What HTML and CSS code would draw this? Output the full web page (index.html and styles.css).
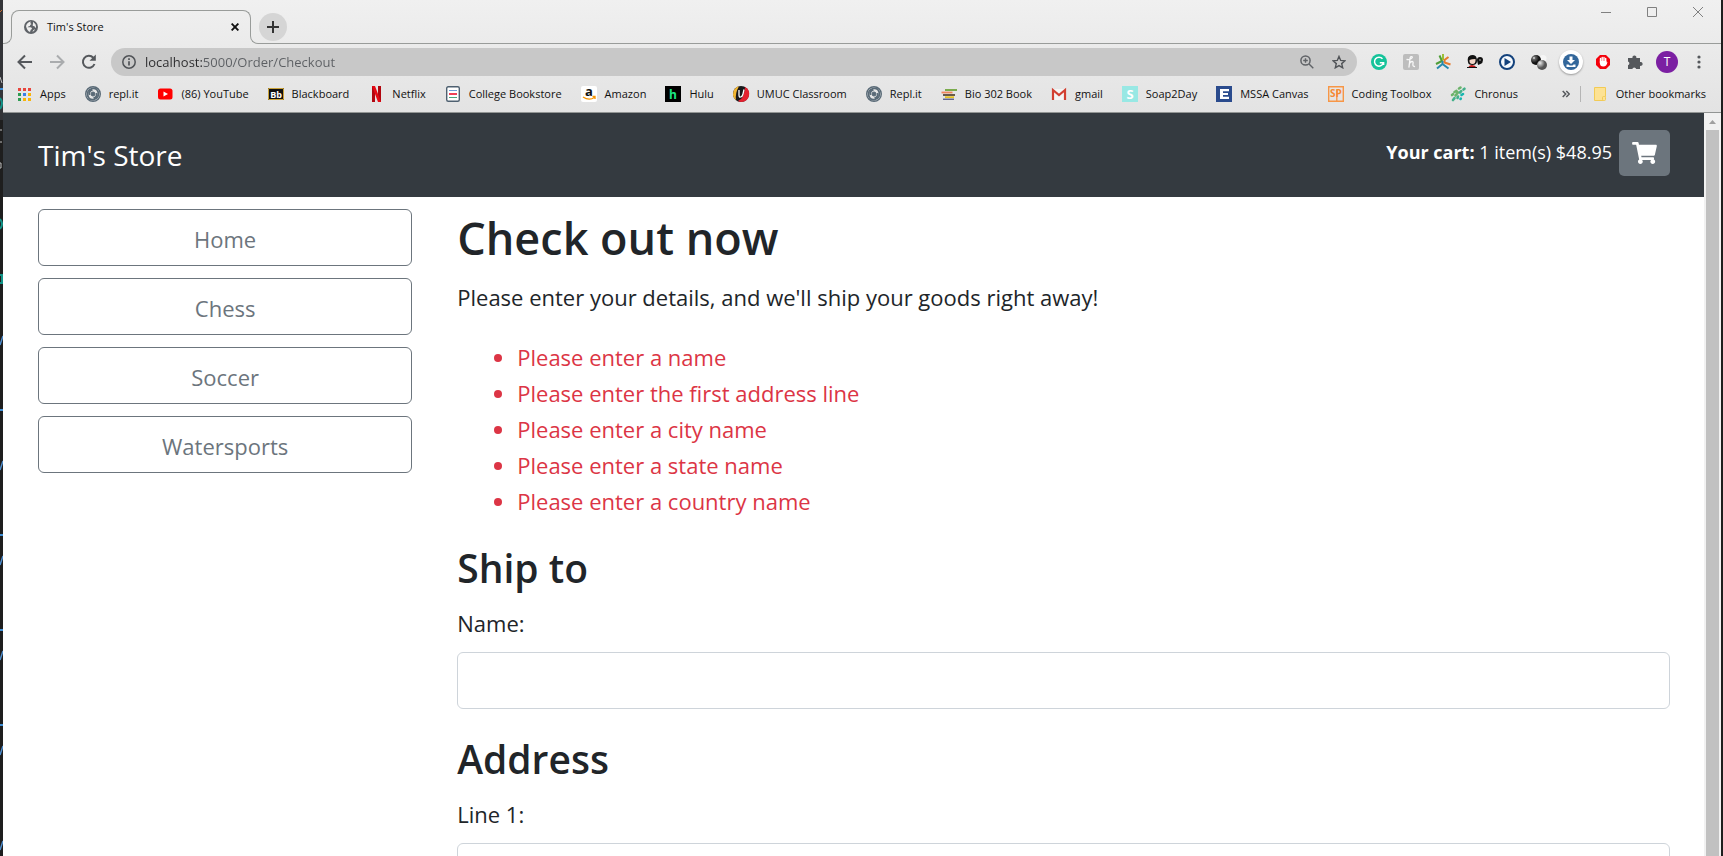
FILE: index.html
```html
<!DOCTYPE html>
<html lang="en">
<head>
<meta charset="utf-8">
<title>Tim's Store</title>
<link rel="stylesheet" href="styles.css">
</head>
<body>
<div class="desktop">
  <svg class="behind" aria-hidden="true" width="3" height="856" viewBox="0 0 3 856">
    <rect width="3" height="856" fill="#1e1e1e"/>
    <rect width="3" height="120" fill="#333438"/>
    <path d="M0 12l2-2" stroke="#c96a2e"/>
    <path d="M0 77l2 6M0 130h2M0 142h2M0 163h1v5H0" stroke="#bdbdbd" fill="none"/>
    <path d="M0 89h3M0 410h3M0 535h3M0 630h3M0 725h3" stroke="#3f8fd6" stroke-width="2"/>
    <path d="M0 98q4 5 0 11M0 219q4 5 0 10M0 275h2v8H0" stroke="#129488" stroke-width="2" fill="none"/>
    <path d="M0 345l3-9M0 470l3-9M0 565l3-9M0 660l3-9M0 755l3-9M0 850l3-9" stroke="#4f8fd0" stroke-width="1.5"/>
  </svg>

  <div class="window">
    <header class="chrome">
      <div class="tabstrip">
        <span class="flare flare-left"></span>
        <div class="tab">
          <svg width="14" height="14" viewBox="0 0 14 14"><circle cx="7" cy="7" r="7" fill="#5f6368"/><path d="M2 6q1-4 5-4.500Q5.500 3 7.500 4q-2 .8-1.500 2-2 .2-2.500 1.200h3q1.500.2 1.500 1.800-1.500 0-2 3Q3 11 2 6z" fill="#eee"/><path d="M9 1.800l2.500 2.500q.8 2 .5 3.500-1 0-1.500-1.500-1.500 0-2-1 .8-.8.500-3.500zM11 9q-.5 2-2.500 3 .2-2 2.500-3z" fill="#eee"/></svg>
          <span class="tab-title">Tim's Store</span>
          <button class="tab-close" aria-label="Close tab"><svg width="8" height="8" viewBox="0 0 8 8"><path d="M.6.600l6.800 6.800M7.400.6L.6 7.400" stroke="#111" stroke-width="1.900"/></svg></button>
        </div>
        <span class="flare flare-right"></span>
        <div class="strip-rest">
          <button class="new-tab" aria-label="New tab"><svg width="12" height="12" viewBox="0 0 12 12"><path d="M6 0v12M0 6h12" stroke="#333" stroke-width="2"/></svg></button>
          <div class="controls">
            <button aria-label="Minimize"><svg width="10" height="10" viewBox="0 0 10 10"><path d="M0 5.500h10" stroke="#808080"/></svg></button>
            <button aria-label="Maximize"><svg width="10" height="10" viewBox="0 0 10 10"><path d="M.5.500h9v9h-9z" fill="none" stroke="#808080"/></svg></button>
            <button aria-label="Close window"><svg width="10" height="10" viewBox="0 0 10 10"><path d="M0 0l10 10M10 0L0 10" stroke="#808080"/></svg></button>
          </div>
        </div>
      </div>

      <div class="toolbar">
        <button class="tool" aria-label="Back"><svg width="16" height="16" viewBox="0 0 16 16"><path d="M15 8H2M8 1.500L1.500 8 8 14.500" fill="none" stroke="#55585c" stroke-width="2"/></svg></button>
        <button class="tool" aria-label="Forward"><svg width="16" height="16" viewBox="0 0 16 16"><path d="M1 8h13M8 1.500L14.500 8 8 14.500" fill="none" stroke="#aaacae" stroke-width="2"/></svg></button>
        <button class="tool" aria-label="Reload"><svg width="16" height="16" viewBox="0 0 16 16"><path d="M13.500 10A6 6 0 1 1 12.300 3.700" fill="none" stroke="#55585c" stroke-width="2"/><path d="M14.800.5v6.300H8.500z" fill="#55585c"/></svg></button>
        <div class="omnibox">
          <svg width="14" height="14" viewBox="0 0 14 14"><circle cx="7" cy="7" r="6.200" fill="none" stroke="#505357" stroke-width="1.500"/><path d="M7 6.200V10.500M7 3.300v1.700" stroke="#505357" stroke-width="1.700"/></svg>
          <input class="address" type="text" aria-label="Address" value="localhost:5000/Order/Checkout">
          <button class="tool" aria-label="Zoom"><svg width="14" height="14" viewBox="0 0 14 14"><circle cx="5.500" cy="5.500" r="4.600" fill="none" stroke="#606367" stroke-width="1.500"/><path d="M9 9l4.300 4.300M3.200 5.500h4.600M5.500 3.200v4.600" stroke="#606367" stroke-width="1.400"/></svg></button>
          <button class="tool" aria-label="Bookmark"><svg width="14" height="14" viewBox="0 0 14 14"><path d="M7 1.400l1.700 4 4.300.4-3.300 2.800 1 4.200L7 10.600l-3.700 2.200 1-4.200L1 5.800l4.300-.4z" fill="none" stroke="#505357" stroke-width="1.400"/></svg></button>
        </div>
        <button class="tool" aria-label="Grammarly"><svg width="16" height="16" viewBox="0 0 16 16"><circle cx="8" cy="8" r="8" fill="#15c39a"/><path d="M11.500 4.800A4.500 4.500 0 1 0 12.300 9M8.800 8.700h3.800V11" fill="none" stroke="#fff" stroke-width="1.500"/></svg></button>
        <button class="tool" aria-label="Honey"><svg width="16" height="16" viewBox="0 0 16 16"><rect width="16" height="16" rx="2" fill="#bdbdbd"/><path d="M4 5.500q2 .5 4-.8t1-2q-1.500-.6-2 1.800L6 13M6.500 9.500q1-2 2.500-2t1 2q-.6 3 1.500 3" fill="none" stroke="#f7f7f7" stroke-width="1.300" stroke-linecap="round"/></svg></button>
        <button class="tool" aria-label="Tab tools"><svg width="16" height="16" viewBox="0 0 16 16" fill="none" stroke-width="2"><path d="M4.500 1.500L7 7l-6 3" stroke="#4f9e38"/><path d="M8 0v6" stroke="#9bbf37"/><path d="M13.500 3L9.500 6v2.500l6 2" stroke="#e77b2d"/><path d="M2 14.500L7.500 10l6 4.500M7.500 7v4" stroke="#2789ad"/></svg></button>
        <button class="tool" aria-label="Reader"><svg width="16" height="16" viewBox="0 0 16 16"><path d="M1 8Q-.5 1 6 1q4 0 4 6 0 4-4.500 4T1 8z" fill="#111"/><path d="M2.500 6q2-1 6-1 .5 5-3 5t-3-4z" fill="#f3d5c6"/><path d="M1 14q1-3 4-3t5 3z" fill="#c01515"/><path d="M0 13.500h10" stroke="#111"/><path d="M10 6q0-3 3-3t3 3-2.500 4L11 11z" fill="#111"/><path d="M12 6h2" stroke="#aaa"/></svg></button>
        <button class="tool" aria-label="Media player"><svg width="16" height="16" viewBox="0 0 16 16"><circle cx="8" cy="8" r="7" fill="#f5f9fd" stroke="#14427c" stroke-width="2"/><path d="M5.500 4l6.500 4-6.500 4z" fill="#14427c"/></svg></button>
        <button class="tool" aria-label="Spheres"><svg width="16" height="16" viewBox="0 0 16 16"><defs><radialGradient id="dark" cx=".3" cy=".3"><stop stop-color="#fff"/><stop offset=".3" stop-color="#666"/><stop offset="1" stop-color="#111"/></radialGradient><radialGradient id="gray" cx=".3" cy=".3"><stop stop-color="#eee"/><stop offset="1" stop-color="#555"/></radialGradient></defs><circle cx="12" cy="4.500" r="3.500" fill="#f6f6f6"/><circle cx="5" cy="6" r="5" fill="url(#dark)"/><circle cx="11" cy="11" r="5" fill="url(#gray)"/></svg></button>
        <button class="tool" aria-label="Downloader"><span class="halo"><svg width="16" height="16" viewBox="0 0 16 16"><circle cx="8" cy="8" r="8" fill="#33679b"/><path d="M6.500 2.500h3v3.500H12L8 10 4 6h2.500zM3.500 10.500h2l1 1h3l1-1h2V13h-9z" fill="#fff"/></svg></span></button>
        <button class="tool" aria-label="Ad blocker"><svg width="14" height="14" viewBox="0 0 14 14"><path d="M4 0h6l4 4v6l-4 4H4l-4-4V4z" fill="#f4000b"/><path d="M4.500 8V3.500M6.200 7V2.500M8 7V2.500M9.700 8V3.500" stroke="#fff" stroke-width="1.400" stroke-linecap="round"/><path d="M3.900 6h6.500v1.500L11.500 7q-.8 4.500-4.200 4.500T3.900 8z" fill="#fff"/></svg></button>
        <button class="tool" aria-label="Extensions"><svg width="16" height="16" viewBox="0 0 16 16"><path d="M1 4h4.500a2 2 0 1 1 3.800 0H13v4a2 2 0 1 1 0 3.800V15H9.200a2 2 0 0 0-3.900 0H1v-3.800a2 2 0 0 0 0-3.800z" fill="#55585c"/></svg></button>
        <button class="tool" aria-label="Profile"><span class="avatar">T</span></button>
        <button class="tool" aria-label="Menu"><svg width="4" height="14" viewBox="0 0 4 14" fill="#55585c"><circle cx="2" cy="2" r="1.600"/><circle cx="2" cy="7" r="1.600"/><circle cx="2" cy="12" r="1.600"/></svg></button>
      </div>

      <nav class="bookmarks" aria-label="Bookmarks">
        <a class="bookmark" href="#"><svg viewBox="0 0 16 16"><path d="M2 2h3v3H2z M7 2h3v3H7z" fill="#e8453c"/><path d="M12 2h3v3h-3z" fill="#e8453c"/><path d="M2 7h3v3H2zM2 12h3v3H2z" fill="#2e9c52"/><path d="M7 7h3v3H7z" fill="#3a7de8"/><path d="M12 7h3v3h-3zM7 12h3v3H7zM12 12h3v3h-3z" fill="#f8b40a"/></svg>Apps</a>
        <a class="bookmark" href="#"><svg viewBox="0 0 16 16" fill="none" stroke="#596a77"><circle cx="8" cy="8" r="7.300" stroke-width="1.400"/><circle cx="8" cy="8" r="2" fill="#596a77"/><path d="M3 11Q1 4 7 2.500q5-1 6 3.500M13 5q2 7-4 8.500-5 1-6-3.500M4.500 9q-1-4 3-5M11.500 7q1 4-3 5" stroke-width="1.600"/></svg>repl.it</a>
        <a class="bookmark" href="#"><svg viewBox="0 0 16 16"><rect x="1" y="2.500" width="14.500" height="11" rx="2.500" fill="#f00"/><path d="M6.500 5.500L11 8l-4.500 2.500z" fill="#fff"/></svg>(86) YouTube</a>
        <a class="bookmark" href="#"><svg viewBox="0 0 16 16"><rect y="2" width="16" height="12" fill="#111"/><path d="M.5 2.500h15v11H.5z" fill="none" stroke="#caa33a"/><text x="8" y="11.500" text-anchor="middle" class="mark" font-size="9" fill="#fff">Bb</text></svg>Blackboard</a>
        <a class="bookmark" href="#"><svg viewBox="0 0 16 16"><path d="M4 0h3v16H4zM10 0h3v16h-3z" fill="#b1060f"/><path d="M4 0h3l6 16h-3z" fill="#e50914"/></svg>Netflix</a>
        <a class="bookmark" href="#"><svg viewBox="0 0 16 16"><rect x="1.700" y=".7" width="12.600" height="14.600" rx="1.500" fill="#fff" stroke="#4e6070" stroke-width="1.400"/><path d="M4 4.500h8" stroke="#6d9ed8"/><path d="M4 8h8" stroke="#ef4056" stroke-width="2"/><path d="M4 11.500h8" stroke="#4aa57c"/></svg>College Bookstore</a>
        <a class="bookmark" href="#"><svg viewBox="0 0 16 16"><rect width="16" height="16" rx="2" fill="#fff"/><text x="8" y="10" text-anchor="middle" class="mark" font-size="13" fill="#111">a</text><path d="M2 11q6 4 11.500.5M11.500 10.500h2.500v2.500" fill="none" stroke="#f79400" stroke-width="1.300"/></svg>Amazon</a>
        <a class="bookmark" href="#"><svg viewBox="0 0 16 16"><rect width="16" height="16" fill="#000"/><text x="8" y="12.500" text-anchor="middle" class="mark" font-size="12" fill="#1ce783">h</text></svg>Hulu</a>
        <a class="bookmark" href="#"><svg viewBox="0 0 16 16"><circle cx="8" cy="8" r="8" fill="#18181a"/><path d="M3 14.200A8 8 0 0 1 6 .3Q2 7 3 14.200z" fill="#f2b632"/><path d="M12 1A8 8 0 0 1 9 16q-3 0-4-1 6-2 7-14z" fill="#e3212f"/><path d="M6 4v5q0 2.500 1.700 2T10 8l1-4.500" fill="none" stroke="#fff" stroke-width="1.300"/></svg>UMUC Classroom</a>
        <a class="bookmark" href="#"><svg viewBox="0 0 16 16" fill="none" stroke="#596a77"><circle cx="8" cy="8" r="7.300" stroke-width="1.400"/><circle cx="8" cy="8" r="2" fill="#596a77"/><path d="M3 11Q1 4 7 2.500q5-1 6 3.500M13 5q2 7-4 8.500-5 1-6-3.500M4.500 9q-1-4 3-5M11.500 7q1 4-3 5" stroke-width="1.600"/></svg>Repl.it</a>
        <a class="bookmark" href="#"><svg viewBox="0 0 16 16" fill="none" stroke-width="1.800"><path d="M4 4h12" stroke="#6fa53c"/><path d="M.5 6.500h11" stroke="#f0865a"/><path d="M2 9h12" stroke="#5a4a38"/><path d="M4 11.200h9" stroke="#e7c21f"/><path d="M2 13.200h11" stroke="#252e6b" stroke-width="1"/></svg>Bio 302 Book</a>
        <a class="bookmark" href="#"><svg viewBox="0 0 16 16"><path d="M1 3h14v11H1z" fill="#f4f4f4"/><path d="M2 14V4l6 5 6-5v10" fill="none" stroke="#d23f31" stroke-width="2.200"/></svg>gmail</a>
        <a class="bookmark" href="#"><svg viewBox="0 0 16 16"><rect width="16" height="16" fill="#98e8e4"/><text x="8" y="13" text-anchor="middle" class="mark" font-size="13" fill="#fff">S</text></svg>Soap2Day</a>
        <a class="bookmark" href="#"><svg viewBox="0 0 16 16"><rect width="16" height="16" fill="#2a4b8d"/><path d="M4 3h9v2.200H7v1.700h5v2.200H7v1.700h6V13H4z" fill="#fff"/></svg>MSSA Canvas</a>
        <a class="bookmark" href="#"><svg viewBox="0 0 16 16"><path d="M.7.700h14.600v14.600H.7z" fill="none" stroke="#f79646" stroke-width="1.400"/><path d="M8.800 4v11.500" stroke="#f79646" stroke-width="1.400"/><text x="8" y="11" text-anchor="middle" class="mark" font-size="10" fill="#f58a33">SP</text></svg>Coding Toolbox</a>
        <a class="bookmark" href="#"><svg viewBox="0 0 16 16" stroke-linecap="round" stroke-width="2.600"><path d="M9 2.500l1.500-1M4.500 6l2-1.200M2 9l1-.8M5.500 9.500l2.500-3" stroke="#6db36b"/><path d="M10 6.500l1.200-1.300M13.500 3.500l1-.8M3 14l1.500-1.800M7.500 12l.5-1.500" stroke="#44b08a"/><path d="M11.500 9l1.500-1M10.500 13l.3-.4" stroke="#16b5b0"/></svg>Chronus</a>
        <button class="overflow" aria-label="More bookmarks"><svg width="8" height="8" viewBox="0 0 8 8"><path d="M.7 1l3 3-3 3M4.300 1l3 3-3 3" fill="none" stroke="#55585c" stroke-width="1.500"/></svg></button>
        <a class="bookmark other" href="#"><svg viewBox="0 0 16 16"><path d="M2.500 1.500h11v9q-2 0-2 4h-9z" fill="#fde293" stroke="#f2cb55"/><rect x="10.500" y="10.500" width="3" height="4" rx="1" fill="#fde293" stroke="#f2cb55"/></svg>Other bookmarks</a>
      </nav>
    </header>

    <div class="viewport">
      <div class="page">
        <div class="navbar">
          <a class="brand" href="#">Tim's Store</a>
          <div class="cart">
            <span class="cart-text"><b>Your cart:</b> 1 item(s) $48.95</span>
            <a class="cart-button" href="#" aria-label="View cart"><svg width="25" height="22" viewBox="0 0 576 512"><path fill="#fff" d="M528.120 301.319l47.273-208C578.806 78.301 567.391 64 551.990 64H159.208l-9.166-44.810C147.758 8.021 137.930 0 126.529 0H24C10.745 0 0 10.745 0 24v16c0 13.255 10.745 24 24 24h69.883l70.248 343.435C147.325 417.100 136 435.222 136 456c0 30.928 25.072 56 56 56s56-25.072 56-56c0-15.674-6.447-29.835-16.824-40h209.647C430.447 426.165 424 440.326 424 456c0 30.928 25.072 56 56 56s56-25.072 56-56c0-22.172-12.888-41.332-31.579-50.405l5.517-24.276c3.413-15.018-8.002-29.319-23.403-29.319H218.117l-6.545-32h293.145c11.206 0 20.920-7.754 23.403-18.681z"/></svg></a>
          </div>
        </div>

        <div class="row">
          <nav class="categories" aria-label="Categories">
            <a class="category" href="#">Home</a>
            <a class="category" href="#">Chess</a>
            <a class="category" href="#">Soccer</a>
            <a class="category" href="#">Watersports</a>
          </nav>
          <main class="checkout">
            <h2>Check out now</h2>
            <p>Please enter your details, and we'll ship your goods right away!</p>
            <ul class="errors">
              <li>Please enter a name</li>
              <li>Please enter the first address line</li>
              <li>Please enter a city name</li>
              <li>Please enter a state name</li>
              <li>Please enter a country name</li>
            </ul>
            <form>
              <h3>Ship to</h3>
              <div class="field"><label for="name">Name:</label><input id="name" type="text"></div>
              <h3>Address</h3>
              <div class="field"><label for="line1">Line 1:</label><input id="line1" type="text"></div>
            </form>
          </main>
        </div>
      </div>
      <div class="scrollbar" aria-hidden="true">
        <svg width="17" height="17" viewBox="0 0 17 17"><path d="M5 11l3.500-4 3.500 4z" fill="#a0a0a0"/></svg>
        <div class="thumb"></div>
      </div>
    </div>
  </div>
</div>
</body>
</html>
```
FILE: styles.css
```css
* { box-sizing: border-box; }

body {
  margin: 0;
  overflow: hidden;
  font-family: "Open Sans", "Noto Sans", sans-serif;
  color: #212529;
}

button {
  padding: 0;
  border: 0;
  background: none;
  font: inherit;
}

svg { display: block; flex: none; }

.desktop {
  display: flex;
  height: 100vh;
  padding-right: 2px;
  background: #1e1e1e;
}

.window {
  flex: 1;
  min-width: 0;
  display: flex;
  flex-direction: column;
}

/* Browser chrome */
.chrome {
  background: linear-gradient(#f0f0f0, #e3e3e3);
  border-bottom: 1px solid #929594;
  font-size: 12px;
  color: #111;
}

.tabstrip {
  display: flex;
  align-items: flex-end;
  height: 44px;
}

.flare {
  width: 8px;
  height: 8px;
  border-bottom: 1px solid #999c9a;
}
.flare-left {
  margin-right: -1px;
  width: 9px;
  border-right: 1px solid #999c9a;
  border-bottom-right-radius: 8px;
}
.flare-right {
  margin-left: -1px;
  border-left: 1px solid #999c9a;
  border-bottom-left-radius: 8px;
}

.tab {
  display: flex;
  align-items: center;
  gap: 9px;
  width: 240px;
  height: 26px;
  margin-bottom: 8px;
  padding: 6px 11px 0 12px;
  border: 1px solid #999c9a;
  border-bottom: 0;
  border-radius: 8px 8px 0 0;
}
.tab-title { flex: 1; font-size: 11px; }

.strip-rest {
  flex: 1;
  display: flex;
  justify-content: space-between;
  height: 100%;
  border-bottom: 1px solid #999c9a;
}

.new-tab {
  display: grid;
  place-items: center;
  width: 28px;
  height: 28px;
  margin: 13px 0 0 1px;
  border-radius: 50%;
  background: #d5d5d5;
}

.controls { display: flex; height: 24px; }
.controls button {
  display: grid;
  place-items: center;
  width: 46px;
}

.toolbar {
  display: flex;
  align-items: center;
  height: 36px;
  padding: 0 6px;
}

.tool {
  flex: none;
  display: grid;
  place-items: center;
  width: 32px;
  height: 28px;
}

.omnibox {
  flex: 1;
  display: flex;
  align-items: center;
  height: 28px;
  margin: 0 6px;
  padding: 0 2px 0 11px;
  border-radius: 14px;
  background: #c8c8c8;
}

.address {
  flex: 1;
  min-width: 0;
  padding: 0 0 0 9px;
  border: 0;
  outline: 0;
  font: 13px "Open Sans", "Noto Sans", sans-serif;
  color: transparent;
  background: linear-gradient(90deg, #2b2b2d 66px, #5c5f63 66px);
  background-clip: text;
  -webkit-background-clip: text;
}

.halo {
  display: grid;
  place-items: center;
  width: 24px;
  height: 24px;
  border-radius: 50%;
  background: #fff;
  box-shadow: 0 1px 2px #999;
}

.avatar {
  width: 22px;
  height: 22px;
  border-radius: 50%;
  background: #7b1fa2;
  color: #fff;
  line-height: 22px;
  text-align: center;
}

.bookmarks {
  display: flex;
  align-items: center;
  gap: 19px;
  height: 32px;
  padding: 0 15px 5px 13px;
}

.bookmark {
  display: flex;
  align-items: center;
  gap: 8px;
  color: #111;
  font-size: 11px;
  text-decoration: none;
  white-space: nowrap;
}
.bookmark svg { width: 16px; height: 16px; overflow: visible; }

.mark { font-family: "Open Sans", sans-serif; font-weight: 700; }

.overflow { margin-left: auto; margin-right: -9px; }

.other {
  height: 16px;
  padding-left: 11px;
  border-left: 1px solid #b5b5b5;
}

/* Store page */
.viewport {
  flex: 1;
  min-height: 0;
  display: flex;
  background: #fff;
}

.page {
  flex: 1;
  min-width: 0;
  overflow: hidden;
  font-size: 22px;
  line-height: 36px;
}

.navbar {
  display: flex;
  justify-content: space-between;
  align-items: flex-start;
  padding: 17px 34px 21px 35px;
  background: #343a40;
  color: #fff;
}

.brand {
  padding-top: 5px;
  color: #fff;
  font-size: 28px;
  line-height: 41px;
  text-decoration: none;
}

.cart { display: flex; gap: 7px; }
.cart-text { padding-top: 4px; font-size: 18px; }
.cart-button {
  display: grid;
  place-items: center;
  width: 51px;
  height: 46px;
  border-radius: 5px;
  background: #6c757d;
}

.row {
  display: grid;
  grid-template-columns: 1fr 3fr;
  padding: 12px;
}

.categories {
  display: flex;
  flex-direction: column;
  gap: 12px;
  padding: 0 22px 0 23px;
}

.category {
  padding: 11px 10px 8px;
  border: 1px solid #6c757d;
  border-radius: 6px;
  color: #6c757d;
  line-height: 36px;
  text-align: center;
  text-decoration: none;
}

.checkout { padding: 0 22px 0 23px; }

h2, h3 {
  margin: 0 0 12px;
  font-weight: 600;
}
h2 { font-size: 45px; line-height: 58px; }
h3 { font-size: 39px; line-height: 50px; }

p { margin: 0 0 24px; }

.errors {
  margin: 0 0 24px;
  padding-left: 60px;
  color: #dc3545;
}

.field { margin-bottom: 25px; }
.field label { display: block; margin-bottom: 11px; }
.field input {
  display: block;
  width: 100%;
  height: 57px;
  padding: 8px 18px;
  border: 1px solid #ced4da;
  border-radius: 6px;
  background: #fff;
  font: inherit;
}

.scrollbar {
  width: 17px;
  display: flex;
  flex-direction: column;
  background: #f1f1f1;
}
.thumb {
  flex: 1;
  margin: 0 2px;
  background: #c1c1c1;
}
```
